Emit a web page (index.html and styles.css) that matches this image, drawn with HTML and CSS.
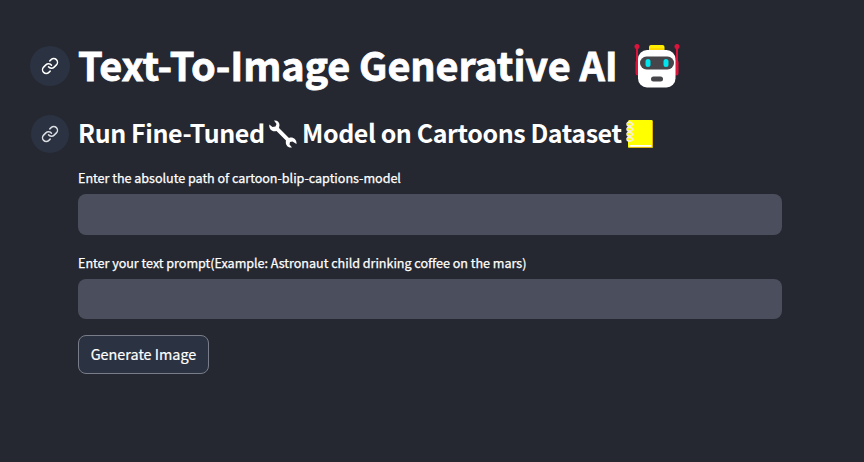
FILE: index.html
```html
<!DOCTYPE html>
<html lang="en">
<head>
<meta charset="utf-8">
<title>Text-To-Image Generative AI</title>
<link rel="stylesheet" href="styles.css">
</head>
<body>
<main class="app">
  <div class="heading heading-main">
    <a class="anchor"><svg viewBox="0 0 24 24"><path d="M10 13a5 5 0 0 0 7.54.54l3-3a5 5 0 0 0-7.07-7.07l-1.72 1.71"/><path d="M14 11a5 5 0 0 0-7.54-.54l-3 3a5 5 0 0 0 7.07 7.07l1.71-1.71"/></svg></a>
    <h1>Text-To-Image Generative AI</h1>
    <svg class="robot" viewBox="0 0 46 46">
      <path d="M3 5v27M43 5v27" stroke="#dc143c" stroke-width="2"/>
      <circle cx="3" cy="3.5" r="2.5" fill="#dc143c"/><circle cx="43" cy="3.5" r="2.5" fill="#dc143c"/>
      <rect x="1.5" y="17" width="6" height="15.5" rx="2.5" fill="#dc143c"/><rect x="38.5" y="17" width="6" height="15.5" rx="2.5" fill="#dc143c"/>
      <rect x="15" y="2" width="15.5" height="8" rx="2" fill="#ffee00"/>
      <rect x="4" y="7" width="37.5" height="37.5" rx="9" fill="#fff"/>
      <rect x="15.5" y="5" width="14.5" height="2" fill="#ffd800"/>
      <rect x="6" y="13.5" width="34" height="13" rx="6.5" fill="#45454a"/>
      <rect x="11.5" y="16" width="5" height="8" rx="2.5" fill="#00e5ee"/><rect x="29.5" y="16" width="5" height="8" rx="2.5" fill="#00e5ee"/>
      <rect x="17" y="33.5" width="12" height="5" rx="2.5" fill="#45454a"/>
    </svg>
  </div>
  <div class="heading heading-sub">
    <a class="anchor"><svg viewBox="0 0 24 24"><path d="M10 13a5 5 0 0 0 7.54.54l3-3a5 5 0 0 0-7.07-7.07l-1.72 1.71"/><path d="M14 11a5 5 0 0 0-7.54-.54l-3 3a5 5 0 0 0 7.07 7.07l1.71-1.71"/></svg></a>
    <h2><span class="sub-start">Run Fine-Tuned</span>
      <svg class="wrench" viewBox="0 0 28 28"><path d="M5 .5C8 0 10.5 2 10.5 5L10 8 20 18C24 16.5 28 19.5 27.5 24L23.5 21.5 21 22 20.5 24.5 23 27.5C19 28 16 25 17 20.5L7.5 11C3 12.5-.3 9 .3 4.500L3.500 7 6.500 6.500 7.500 4Z" fill="#fff"/></svg>
      <span class="sub-end">Model on Cartoons Dataset</span>
      <svg class="book" viewBox="0 0 27 30"><rect x="2" y="1" width="25" height="28" rx="1.5" fill="#ffff00"/><path d="M3 28.500h23M26.500 2v26" stroke="#dfb500" stroke-width="1"/><path d="M3 26h22v1.800H3z" fill="#fff"/><path d="M7 6.500C5.500 2 1 2.500 1 5S3.500 7.500 5.500 6.500M7 11.500C5.500 7 1 7.500 1 10s2.500 2.500 4.500 1.500M7 16.500C5.500 12 1 12.500 1 15s2.500 2.500 4.500 1.500M7 21.500C5.500 17 1 17.500 1 20s2.500 2.500 4.500 1.500" fill="none" stroke="#f5efe0" stroke-width="1.600"/></svg>
    </h2>
  </div>
  <form class="form">
    <label for="path">Enter the absolute path of cartoon-blip-captions-model</label>
    <input id="path" class="field field-path" type="text">
    <label for="prompt">Enter your text prompt(Example: Astronaut child drinking coffee on the mars)</label>
    <input id="prompt" class="field field-prompt" type="text">
    <button type="button">Generate Image</button>
  </form>
</main>
</body>
</html>
```
FILE: styles.css
```css
* { box-sizing: border-box; }
body {
  margin: 0;
  background: #252831;
  color: #fff;
  font-family: "Noto Sans CJK SC", "Noto Sans", sans-serif;
}
.app { padding: 43px 82px 0 30px; }
.heading { display: flex; align-items: center; }
.heading-main { height: 46px; }
.heading-sub { height: 40px; margin-top: 25px; }
.anchor {
  display: flex;
  align-items: center;
  justify-content: center;
  width: 40px;
  height: 40px;
  margin-right: 8px;
  border-radius: 50%;
  background: #2b3241;
}
.heading-sub .anchor { width: 38px; height: 38px; margin-left: 1px; margin-right: 9px; }
.anchor svg { width: 18px; height: 18px; fill: none; stroke: #fff; stroke-width: 2; stroke-linecap: round; stroke-linejoin: round; }
.heading-sub .anchor svg { stroke: #dcdde2; }
h1, h2 { margin: 0; white-space: nowrap; font-weight: 700; }
h1 {
  width: 556px;
  padding-bottom: 5px;
  font-size: 39.6px;
  line-height: 43px;
  letter-spacing: -0.11px;
  -webkit-text-stroke: 0.8px #fff;
}
h2 { display: flex; align-items: center; font-size: 25px; line-height: 36px; letter-spacing: -0.42px; }
h2 span { padding-bottom: 4px; }
.robot { width: 46px; height: 46px; flex: none; }
.sub-start { width: 191px; }
.wrench { width: 28px; height: 28px; margin-right: 5px; }
.sub-end { width: 324px; }
.book { width: 27px; height: 30px; }
.form { display: flex; flex-direction: column; align-items: flex-start; padding: 14px 0 0 48px; }
label {
  height: 20px;
  margin-bottom: 6px;
  font-size: 12.6px;
  line-height: 20px;
  letter-spacing: -0.03px;
  white-space: nowrap;
  -webkit-text-stroke: 0.25px #fff;
}
.field { width: 704px; height: 41px; margin: 0 0 18px; padding: 0 12px; border: 0; border-radius: 8px; background: #4b4e5c; color: #fff; }
.field-prompt { height: 40px; margin-bottom: 16px; }
button {
  width: 131px;
  height: 39px;
  padding: 0 0 2px;
  border: 1px solid #797d89;
  border-radius: 8px;
  background: #2b3241;
  color: #fff;
  font: 400 14.4px/35px "Noto Sans CJK SC", "Noto Sans", sans-serif;
  -webkit-text-stroke: 0.2px #fff;
}
```
